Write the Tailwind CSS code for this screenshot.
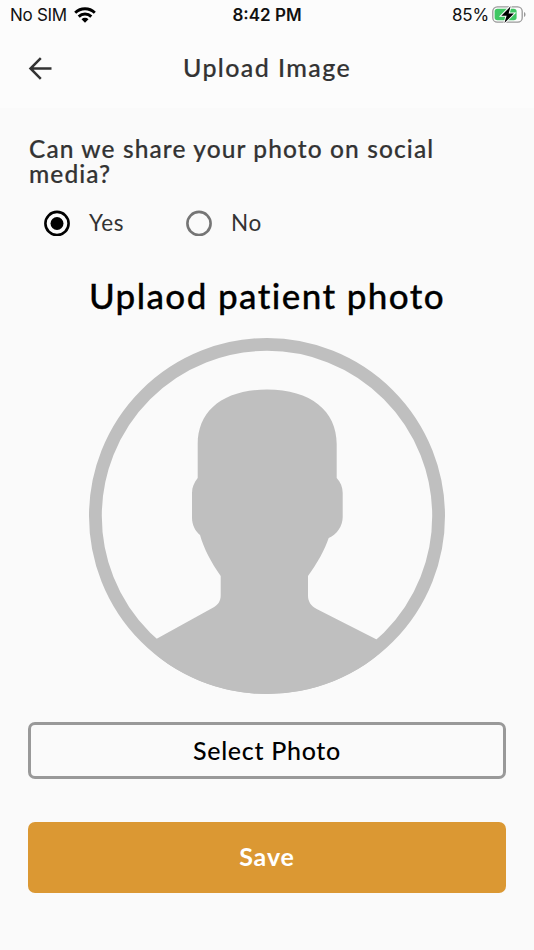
<!DOCTYPE html>
<html lang="en">
<head>
  <meta charset="UTF-8">
  <meta name="viewport" content="width=device-width, initial-scale=1.0">
  <title>Upload Image</title>
  <script src="https://cdn.jsdelivr.net/npm/@tailwindcss/browser@4"></script>
</head>
<body class="h-[950px] overflow-hidden bg-[#fafafa] font-[Lato,sans-serif] text-[#333]">
  <div class="h-[108px] bg-[#fcfcfc]">
    <!-- status bar -->
    <div class="grid h-[30px] grid-cols-3 items-center pl-[10px] pr-[8px] font-[Inter,sans-serif] text-[17px] text-[#111]">
      <div class="flex items-center gap-[7px]">
        <span class="pt-[2px] tracking-[-0.3px] whitespace-nowrap">No SIM</span>
        <svg class="h-[16px] w-[22px]" viewBox="0 0 22 16" fill="none" stroke="#000" stroke-width="2.9">
          <path d="M1.2 5.8a14 14 0 0 1 19.6 0"/>
          <path d="M4.7 9.6a9 9 0 0 1 12.6 0"/>
          <path d="M11 15.7 7.5 12.2a5 5 0 0 1 7 0z" fill="#000" stroke="none"/>
        </svg>
      </div>
      <span class="pt-[2px] pr-[2px] text-center font-semibold whitespace-nowrap">8:42 PM</span>
      <div class="flex items-center justify-end gap-[3px]">
        <span class="pt-[2px] tracking-[-0.2px]">85%</span>
        <svg class="h-[20px] w-[34px]" viewBox="0 0 34 20">
          <rect x=".8" y="1.8" width="29.4" height="15.4" rx="4.5" fill="#fcfcfc" stroke="#999" stroke-width="1.3"/>
          <rect x="2.6" y="3.7" width="22" height="11.6" rx="2.8" fill="#3fc763"/>
          <path d="M32 7c2 .8 2 4.2 0 5z" fill="#999"/>
          <path d="M18.6 1.3 9.3 10.7h5.3l-2.2 7.3 9.5-9.4h-5.3z" fill="#000" stroke="#fcfcfc" stroke-width="2" paint-order="stroke"/>
        </svg>
      </div>
    </div>
    <!-- header -->
    <div class="grid h-[76px] grid-cols-[48px_1fr_48px] items-center px-[28px]">
      <svg class="h-[24px] w-[24px]" viewBox="0 0 24 24" fill="none" stroke="#333" stroke-width="2.5">
        <path d="M23.5 12.5H2.5M12.8 2.2 2.5 12.5l10.3 10.3"/>
      </svg>
      <h1 class="text-center text-[25px] font-medium tracking-[1.4px] whitespace-nowrap [-webkit-text-stroke:0.2px]">Upload Image</h1>
    </div>
  </div>

  <div class="flex flex-col px-[28px] pt-[28px]">
    <p class="pl-px text-[24.5px] leading-[25px] font-medium tracking-[1.1px] whitespace-nowrap [-webkit-text-stroke:0.2px]">Can we share your photo on social<br>media?</p>

    <div class="mt-[22px] flex h-[30px] items-center pl-[16px] text-[22.5px] tracking-[0.6px]">
      <label class="flex w-[142px] items-center gap-[19px]">
        <svg class="h-[26px] w-[26px]" viewBox="0 0 26 26">
          <circle cx="13" cy="13.5" r="11.6" fill="none" stroke="#000" stroke-width="2.6"/>
          <circle cx="13" cy="13.5" r="6.5" fill="#000"/>
        </svg>
        <span>Yes</span>
      </label>
      <label class="flex items-center gap-[19px]">
        <svg class="h-[26px] w-[26px]" viewBox="0 0 26 26">
          <circle cx="13" cy="13.5" r="11.6" fill="none" stroke="#757575" stroke-width="2.6"/>
        </svg>
        <span>No</span>
      </label>
    </div>

    <h2 class="mt-[34px] h-[47px] text-center text-[35px] leading-[46px] font-medium tracking-[1.4px] whitespace-nowrap text-black [-webkit-text-stroke:0.3px]">Uplaod patient photo</h2>

    <svg class="mx-auto mt-[18.5px] h-[356px] w-[356px]" viewBox="0 0 356 356">
      <clipPath id="round"><circle cx="178" cy="178" r="178"/></clipPath>
      <circle cx="178" cy="178" r="171.6" fill="none" stroke="#bfbfbf" stroke-width="12.8"/>
      <path clip-path="url(#round)" fill="#bfbfbf" d="M178 51.5C134 51.5 108.7 73 108.7 106V140C105 145 103 149 103 155V180C103 187 106.5 193.5 111 197C115 211 122 224 131.7 238V257.5C131.7 263 129 267 124.3 269.5L67.7 300.8V356H287.7V301.5L227.7 271C222 268 219 263.5 219 257.5V238C228 226 236 211 239.7 200C248 196.5 253.7 188 253.7 179V155C253.7 149 251.5 144 247.7 140V106C247.7 73 222 51.5 178 51.5Z"/>
    </svg>

    <button class="mt-[28.5px] h-[57px] rounded-[7px] border-[3px] border-[#999] text-[25px] font-medium tracking-[0.7px] text-black">Select Photo</button>
    <button class="mt-[43px] h-[71px] rounded-[7px] bg-[#db9833] pb-[2px] text-[25px] font-bold tracking-[0.9px] text-white">Save</button>
  </div>
</body>
</html>
